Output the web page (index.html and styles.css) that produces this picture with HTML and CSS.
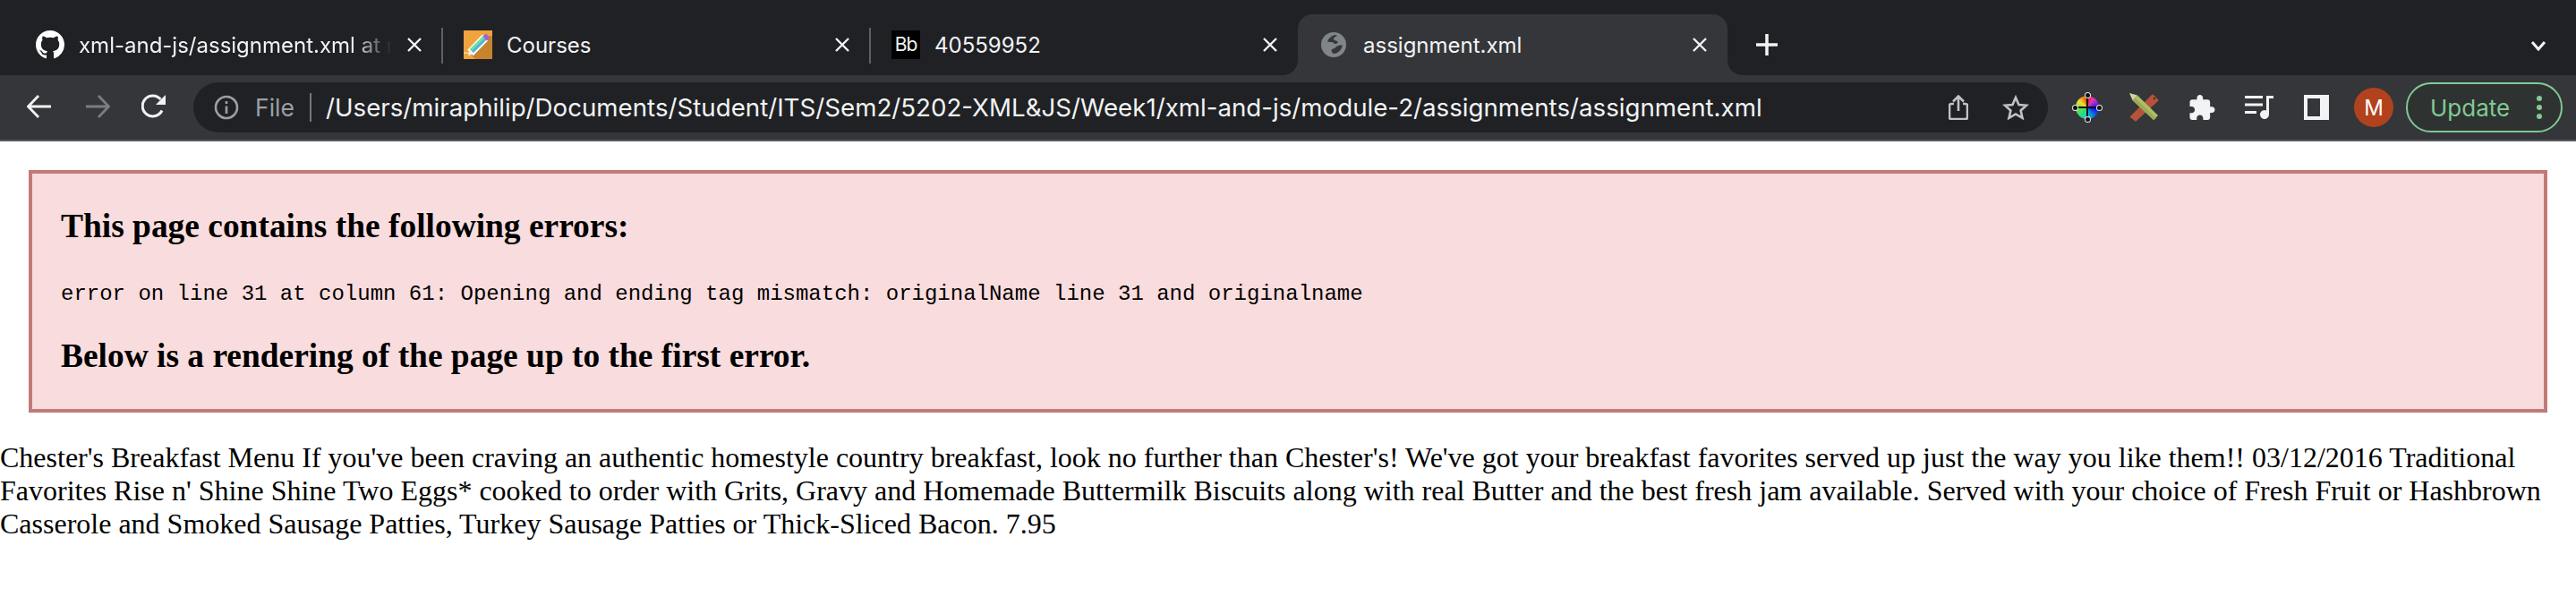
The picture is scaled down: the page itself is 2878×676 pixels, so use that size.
FILE: index.html
```html
<!DOCTYPE html>
<html lang="en">
<head>
<meta charset="utf-8">
<title>assignment.xml</title>
<link rel="stylesheet" href="styles.css">
</head>
<body>
<header class="chrome">
  <div class="tabstrip">
    <div class="tab sep">
      <svg class="favicon" viewBox="0 0 16 16"><path fill="#fff" fill-rule="evenodd" d="M8 0C3.580 0 0 3.580 0 8c0 3.540 2.290 6.530 5.470 7.590.4.07.55-.17.55-.38 0-.19-.01-.82-.01-1.490-2.010.37-2.530-.49-2.690-.94-.09-.23-.48-.94-.82-1.130-.28-.15-.68-.52-.01-.53.63-.01 1.080.58 1.230.82.72 1.210 1.870.87 2.330.66.07-.52.28-.87.51-1.070-1.780-.2-3.640-.89-3.640-3.950 0-.87.31-1.590.82-2.150-.08-.2-.36-1.020.08-2.120 0 0 .67-.21 2.200.82.64-.18 1.320-.27 2-.27.68 0 1.360.09 2 .27 1.530-1.040 2.200-.82 2.200-.82.44 1.100.16 1.920.08 2.120.51.56.82 1.270.82 2.150 0 3.070-1.870 3.750-3.650 3.950.29.25.54.73.54 1.480 0 1.070-.01 1.930-.01 2.200 0 .21.15.46.55.38A8.013 8.013 0 0016 8c0-4.420-3.580-8-8-8z"/></svg>
      <span class="title fade">xml-and-js/assignment.xml at main · miraphilip/xml-and-js</span>
      <svg class="close" viewBox="0 0 18 18"><path d="M2 2l14 14M16 2L2 16"/></svg>
    </div>
    <div class="tab sep">
      <svg class="favicon" viewBox="0 0 32 32"><rect width="32" height="32" fill="#f0a33f"/><path d="M29 6L8 27l5 5h19V6z" fill="#c8832e"/><rect y="24.500" width="8" height="1.500" fill="#f8d7a4"/><path d="M7.500 25L24 8" fill="none" stroke="#fff" stroke-width="9"/><path d="M9 23L24 8" fill="none" stroke="#4fd0c8" stroke-width="6"/><path d="M8 22L23 7" fill="none" stroke="#7fe08e" stroke-width="2"/><path d="M10 24L25 9" fill="none" stroke="#55aee8" stroke-width="2"/><path d="M23 7l2-2 3 3-2 2z" fill="#a463cf" stroke="#a463cf" stroke-width="2"/><path d="M5 28l1.500-6.500 5 5z" fill="#f7efe0"/></svg>
      <span class="title">Courses</span>
      <svg class="close" viewBox="0 0 18 18"><path d="M2 2l14 14M16 2L2 16"/></svg>
    </div>
    <div class="tab">
      <span class="favicon bb">Bb</span>
      <span class="title">40559952</span>
      <svg class="close" viewBox="0 0 18 18"><path d="M2 2l14 14M16 2L2 16"/></svg>
    </div>
    <div class="tab active">
      <svg class="favicon" viewBox="0 0 28 28"><circle cx="14" cy="14" r="14" fill="#80858a"/><path d="M15 3C12 4 9 6 7 10c2 2 6 0 7 2s4 1 5-1c-2-2-6-2-5-4s3-2 4-3.500z" fill="#36373b"/><path d="M24 15c-2-1-5 0-7 1-1 2-3 2-5 3-1 2 0 4 2 5 4 0 8-3 10-9z" fill="#36373b"/></svg>
      <span class="title">assignment.xml</span>
      <svg class="close" viewBox="0 0 18 18"><path d="M2 2l14 14M16 2L2 16"/></svg>
    </div>
    <svg class="newtab" viewBox="0 0 24 24"><path d="M12 0v24M0 12h24"/></svg>
    <svg class="chevron" viewBox="0 0 18 12"><path d="M2 2l7 8 7-8"/></svg>
  </div>
  <div class="toolbar">
    <svg class="navicon" viewBox="0 0 28 26"><path d="M27 13H2M13 1L1.500 13 13 25"/></svg>
    <svg class="navicon dim" viewBox="0 0 28 26"><path d="M1 13h25M15 1l11.500 12L15 25"/></svg>
    <svg class="navicon reload" viewBox="0 0 28 28"><path d="M23 18.500A11.500 11.500 0 1 1 21.500 6"/><path class="solid" d="M27 1v11H16z"/></svg>
    <div class="omnibox">
      <svg class="info" viewBox="0 0 28 28"><circle cx="14" cy="14" r="12"/><path d="M14 12.500V21M14 7v3"/></svg>
      <span class="scheme">File</span>
      <span class="divider"></span>
      <span class="url">/Users/miraphilip/Documents/Student/ITS/Sem2/5202-XML&amp;JS/Week1/xml-and-js/module-2/assignments/assignment.xml</span>
      <svg class="share" viewBox="0 0 22 28"><path d="M6 10H3a2 2 0 0 0-2 2v13a2 2 0 0 0 2 2h16a2 2 0 0 0 2-2V12a2 2 0 0 0-2-2h-3M11 18V2M5 7.500l6-6 6 6"/></svg>
      <svg class="star" viewBox="0 0 30 28"><path d="M15 3l3.500 8 8.500.8-6.400 5.700 1.900 8.300L15 21.400 7.500 25.800l1.900-8.300L3 11.800l8.500-.8z"/></svg>
    </div>
    <div class="extensions">
      <span class="wheel"><i class="disc"></i><i class="line v"></i><i class="line h"></i><i class="knob t"></i><i class="knob b"></i><i class="knob l"></i><i class="knob r"></i></span>
      <svg class="ext pencil" viewBox="0 0 34 32"><path d="M1 26L25 2q1-1 2 0l5 5q1 1 0 2L8 31q-1 1-2 0l-5-4z" fill="#b5533a"/><circle cx="28" cy="6" r="1.200" fill="#3a2a26"/><path d="M9 2.500L32 25l-5 5L3.500 8z" fill="#aebf66"/><path d="M6 5l24 23-3 2L3.500 8z" fill="#9aab57"/><path d="M0 0l9 2.500L3.500 8z" fill="#d4d3a2"/></svg>
      <svg class="ext puzzle" viewBox="2 1 21 21"><path fill="#f1f3f4" d="M20.500 11H19V7c0-1.100-.9-2-2-2h-4V3.500C13 2.120 11.880 1 10.500 1S8 2.120 8 3.500V5H4c-1.100 0-1.990.9-1.990 2v3.800H3.500c1.490 0 2.700 1.210 2.700 2.700s-1.210 2.700-2.700 2.700H2V20c0 1.100.9 2 2 2h3.800v-1.500c0-1.490 1.210-2.700 2.700-2.700 1.490 0 2.700 1.210 2.700 2.700V22H17c1.100 0 2-.9 2-2v-4h1.500c1.380 0 2.500-1.120 2.500-2.500S21.880 11 20.500 11z"/></svg>
      <svg class="ext music" viewBox="0 0 32 26"><path fill="#f1f3f4" d="M0 0h20v3H0zM0 8.500h20v3H0zM0 17h13v3H0z"/><path fill="#f1f3f4" d="M24 0h8v3h-5v18a5 5 0 1 1-3-4.600z"/></svg>
      <span class="panel"></span>
      <span class="avatar">M</span>
      <div class="update"><span>Update</span><span class="dots"><i></i><i></i><i></i></span></div>
    </div>
  </div>
</header>
<main>
  <div class="parsererror">
    <h3>This page contains the following errors:</h3>
    <div class="errline">error on line 31 at column 61: Opening and ending tag mismatch: originalName line 31 and originalname</div>
    <h3>Below is a rendering of the page up to the first error.</h3>
  </div>
  <p class="rendered">Chester's Breakfast Menu If you've been craving an authentic homestyle country breakfast, look no further than Chester's! We've got your breakfast favorites served up just the way you like them!! 03/12/2016 Traditional Favorites Rise n' Shine Shine Two Eggs* cooked to order with Grits, Gravy and Homemade Buttermilk Biscuits along with real Butter and the best fresh jam available. Served with your choice of Fresh Fruit or Hashbrown Casserole and Smoked Sausage Patties, Turkey Sausage Patties or Thick-Sliced Bacon. 7.95</p>
</main>
</body>
</html>
```
FILE: styles.css
```css
* { box-sizing: border-box; }
html, body { margin: 0; padding: 0; background: #fff; }
body { font-family: "Liberation Serif", serif; font-size: 32px; color: #000; overflow: hidden; }

.chrome { font-family: Inter, "Liberation Sans", sans-serif; color: #f1f3f4; }

.tabstrip { height: 84px; background: #202124; display: flex; align-items: flex-end; padding-left: 16px; position: relative; }
.tab { width: 478px; height: 68px; display: flex; align-items: center; padding: 0 22px 0 24px; gap: 16px; position: relative; font-size: 24px; }
.tab.sep::after { content: ""; position: absolute; right: -1px; top: 15px; width: 2px; height: 40px; background: #5f6064; }
.tab.active { width: 480px; background: #35363a; border-radius: 16px 16px 0 0; padding-left: 26px; }
.tab.active::before, .tab.active::after { content: ""; position: absolute; bottom: 0; width: 16px; height: 16px; background: radial-gradient(circle at var(--cx) 0, #202124 15.500px, #35363a 16px); }
.tab.active::before { left: -16px; --cx: 0; }
.tab.active::after { right: -16px; --cx: 100%; }

.favicon { width: 32px; height: 32px; flex: none; display: block; }
.tab.active .favicon { width: 28px; height: 28px; margin-right: 3px; }
.bb { background: #000; color: #f1f1f1; font-size: 21px; letter-spacing: -1px; line-height: 32px; text-align: center; }
.title { flex: 1; min-width: 0; white-space: nowrap; overflow: hidden; }
.fade { -webkit-mask-image: linear-gradient(to right, #000 87%, transparent 100%); mask-image: linear-gradient(to right, #000 87%, transparent 100%); }
.close { width: 18px; height: 18px; flex: none; fill: none; stroke: #f1f3f4; stroke-width: 2.400; }

.newtab { width: 24px; height: 24px; margin: 0 0 22px 32px; fill: none; stroke: #f1f3f4; stroke-width: 3.500; flex: none; }
.chevron { position: absolute; left: 2827px; top: 45px; width: 18px; height: 12px; fill: none; stroke: #f1f3f4; stroke-width: 3; }

.toolbar { height: 74px; background: #35363a; border-bottom: 2px solid #55565a; display: flex; align-items: flex-start; padding: 8px 15px 0 30px; }
.navicon { width: 28px; height: 28px; margin-top: 13px; margin-right: 37px; flex: none; fill: none; stroke: #f1f3f4; stroke-width: 2.800; }
.navicon.dim { stroke: #7b7c7f; margin-right: 35px; }
.navicon.reload { margin-right: 30px; stroke-width: 3; }
.navicon .solid { fill: #f1f3f4; stroke: none; }

.omnibox { width: 2072px; height: 56px; background: #202124; border-radius: 28px; display: flex; align-items: center; padding: 0 21px 0 23px; flex: none; }
.info { width: 28px; height: 28px; flex: none; fill: none; stroke: #9aa0a6; stroke-width: 2.600; margin-right: 18px; }
.scheme { font-size: 26.500px; color: #9aa0a6; }
.divider { width: 2px; height: 32px; background: #77787b; margin: 0 16px 0 17px; flex: none; }
.url { font-size: 27.700px; color: #f1f3f4; white-space: nowrap; flex: 1; min-width: 0; }
.share { width: 22px; height: 28px; flex: none; fill: none; stroke: #c0c2c5; stroke-width: 2.600; margin-right: 38px; }
.star { width: 30px; height: 28px; flex: none; fill: none; stroke: #c0c2c5; stroke-width: 2.600; }

.extensions { display: flex; align-items: center; height: 56px; flex: 1; padding-left: 28px; }
.ext { flex: none; display: block; }
.wheel { width: 32px; height: 32px; position: relative; flex: none; margin-right: 31px; }
.disc { position: absolute; inset: 3px; border-radius: 50%; background: conic-gradient(#e01818, #e03ab0 35deg, #8a20e0 65deg, #1010e8 100deg, #0a6ae0 135deg, #18c8d8 180deg, #30e070 225deg, #70e040 265deg, #e8e830 305deg, #f09018 335deg, #e01818); }
.line { position: absolute; background: #111; }
.line.v { left: 15px; width: 2px; top: 2px; bottom: 2px; }
.line.h { top: 15px; height: 2px; left: 2px; right: 2px; }
.knob { position: absolute; width: 5px; height: 5px; border-radius: 50%; background: #111; box-shadow: 0 0 0 1px #e8e8e8; }
.knob.t { top: 0; left: 13.500px; }
.knob.b { bottom: 0; left: 13.500px; }
.knob.l { left: 0; top: 13.500px; }
.knob.r { right: 0; top: 13.500px; }
.pencil { width: 34px; height: 32px; margin-right: 33px; }
.puzzle { width: 29px; height: 28px; margin-right: 33px; }
.music { width: 32px; height: 26px; margin-right: 34px; }
.panel { width: 28px; height: 28px; border: 4px solid #f1f3f4; border-right-width: 10px; flex: none; margin-right: 28px; }
.avatar { width: 44px; height: 44px; border-radius: 50%; background: #b1421d; color: #fff; font-size: 24px; display: flex; align-items: center; justify-content: center; flex: none; margin-right: 14px; }
.update { width: 175px; height: 56px; border: 2.500px solid #81c995; border-radius: 28px; background: #2e3230; color: #81c995; font-size: 26px; display: flex; align-items: center; padding-left: 25px; flex: none; position: relative; }
.dots { position: absolute; right: 21px; top: 0; bottom: 0; display: flex; flex-direction: column; justify-content: center; gap: 4px; }
.dots i { width: 6px; height: 6px; border-radius: 50%; background: #81c995; display: block; }

.parsererror { display: block; border: 4px solid #c27a78; padding: 0 32px; margin: 32px; background: #f9dcdd; color: #000; }
h3 { font-size: 37.440px; font-weight: bold; margin: 37.440px 0; }
.errline { font-family: "Liberation Mono", monospace; font-size: 24px; white-space: pre; padding-top: 3px; margin-bottom: -3px; }
.rendered { margin: 0; }
```
